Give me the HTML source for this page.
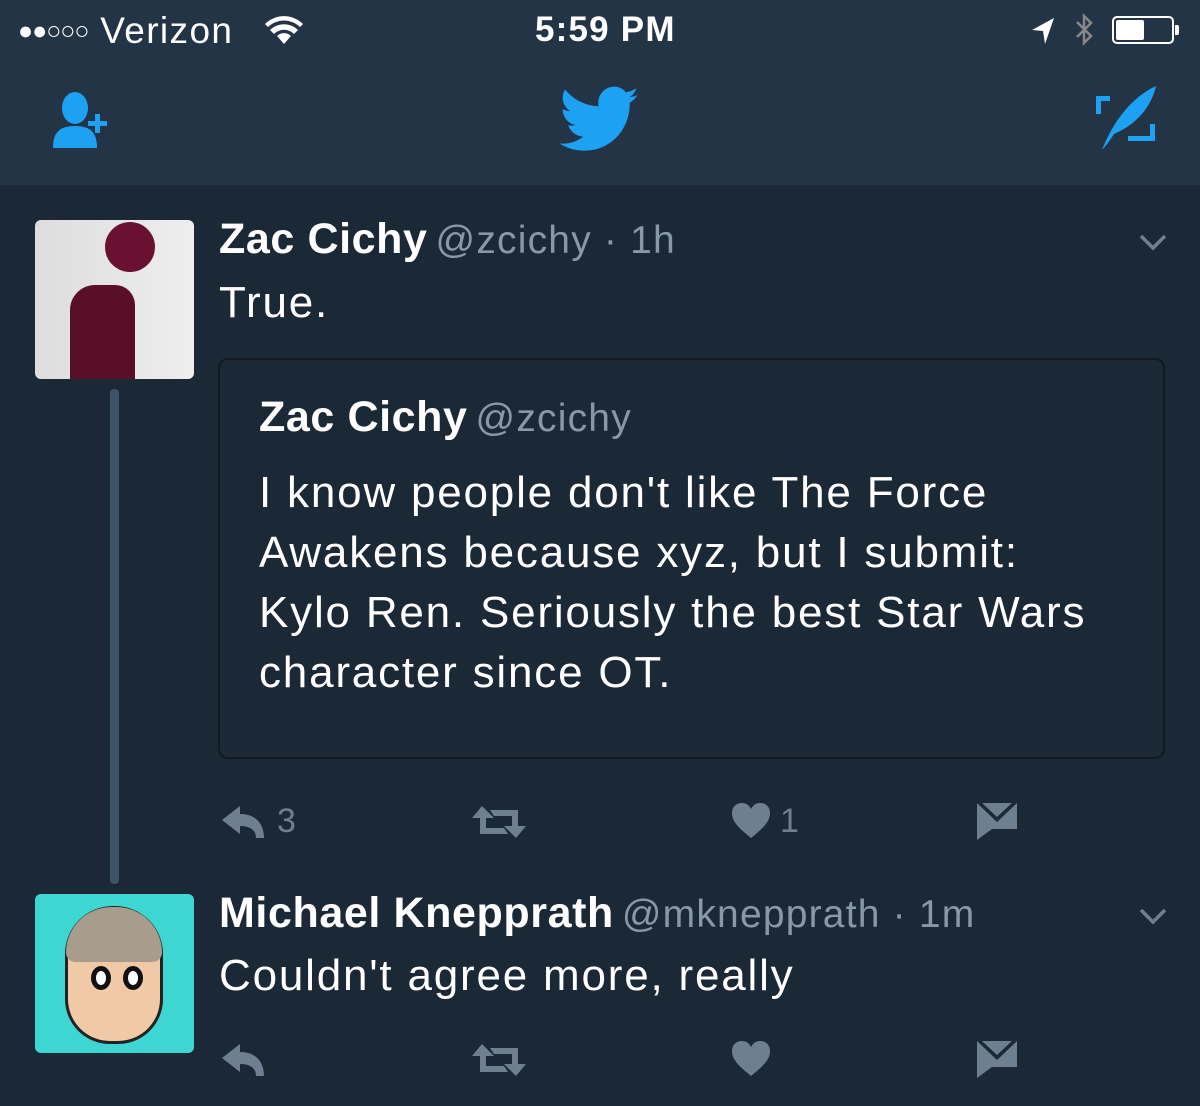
<!DOCTYPE html>
<html><head><meta charset="utf-8"><style>
*{margin:0;padding:0;box-sizing:border-box}
body{width:1200px;height:1106px;background:#1b2836;font-family:"Liberation Sans",sans-serif;color:#fff;position:relative;overflow:hidden}
.hdr{position:absolute;left:0;top:0;width:1200px;height:185px;background:#243447}
.abs{position:absolute;white-space:nowrap}
.name{font-weight:bold;font-size:43px;letter-spacing:0.6px}
.handle{color:#8899a6;font-weight:normal;font-size:39px;letter-spacing:1.2px;margin-left:8px}
.txt{font-size:44px;letter-spacing:1.8px}
.g{fill:#6e7f8f}
</style></head><body>
<div class="hdr"></div>
<div class="abs" style="left:18px;top:10px;font-size:37px;letter-spacing:1.4px">
<span style="font-size:25px;letter-spacing:-1px;position:relative;top:-4px">●●○○○</span> Verizon</div>
<svg class="abs" style="left:264px;top:16px" width="40" height="30" viewBox="0 0 40 30"><path d="M20 28 L13 20 A10 10 0 0 1 27 20 Z M6 14 A20 20 0 0 1 34 14 L30 18 A14 14 0 0 0 10 18 Z M1 8 A27 27 0 0 1 39 8 L36 11 A23 23 0 0 0 4 11Z" fill="#fff"/></svg>
<div class="abs" style="left:535px;top:10px;font-size:35px;font-weight:bold;letter-spacing:1.2px">5:59 PM</div>
<svg class="abs" style="left:1028px;top:14px" width="30" height="32"><path d="M26 4 L4 16 L15 17 L17 30 Z" fill="#fff"/></svg>
<svg class="abs" style="left:1070px;top:10px" width="28" height="40"><path d="M7 12 L21 26 L14 33 L14 6 L21 13 L7 27" stroke="#888" stroke-width="2.5" fill="none"/></svg>
<div class="abs" style="left:1112px;top:16px;width:62px;height:28px;border:2px solid #fff;border-radius:5px"><div style="width:28px;height:20px;margin:2px;background:#fff;border-radius:2px"></div></div>
<div class="abs" style="left:1175px;top:25px;width:4px;height:10px;background:#fff;border-radius:0 2px 2px 0"></div>
<svg class="abs" style="left:50px;top:90px" width="76" height="60" viewBox="0 0 76 60"><ellipse cx="25" cy="18" rx="13" ry="16" fill="#1da1f2"/><path d="M3 58 C3 42 10 36 25 36 C40 36 47 42 47 58 Z" fill="#1da1f2"/><rect x="45" y="24" width="5" height="19" fill="#1da1f2"/><rect x="38" y="31" width="19" height="5" fill="#1da1f2"/></svg>
<svg class="abs" style="left:560px;top:86px" width="80" height="68" viewBox="0 0 24 20"><path fill="#1da1f2" d="M23.6 2.4c-.9.4-1.8.6-2.8.8 1-.6 1.8-1.6 2.1-2.7-.9.6-2 1-3.1 1.2C19 .7 17.7 0 16.3 0c-2.7 0-4.8 2.2-4.8 4.8 0 .4 0 .8.1 1.1C7.5 5.7 3.9 3.8 1.5.8 1.1 1.5.8 2.4.8 3.3c0 1.7.9 3.2 2.2 4-.8 0-1.5-.2-2.2-.6v.1c0 2.3 1.7 4.3 3.9 4.7-.4.1-.8.2-1.3.2-.3 0-.6 0-.9-.1.6 1.9 2.4 3.3 4.5 3.4-1.7 1.3-3.7 2.1-6 2.1-.4 0-.8 0-1.2-.1 2.1 1.4 4.7 2.2 7.4 2.2 8.9 0 13.7-7.4 13.7-13.7v-.6c1-.7 1.8-1.6 2.5-2.5z"/></svg>
<svg class="abs" style="left:1090px;top:84px" width="70" height="70" viewBox="0 0 70 70"><path d="M6 12 H20 V17 H11 V30 H6 Z M38 52 H60 V40 H65 V57 H38 Z" fill="#1da1f2"/><path d="M12 66 C22 40 40 14 66 2 C62 20 50 36 32 46 L24 50 C20 56 16 62 12 66 Z" fill="#1da1f2"/></svg>

<!-- tweet 1 -->
<div class="abs" style="left:35px;top:220px;width:159px;height:159px;border-radius:6px;background:linear-gradient(90deg,#ddd,#eee);overflow:hidden">
<div style="position:absolute;left:70px;top:2px;width:50px;height:50px;border-radius:50%;background:#6a1030"></div>
<div style="position:absolute;left:35px;top:65px;width:65px;height:110px;border-radius:25px 20px 0 0;background:#5a0f28"></div></div>
<div class="abs" style="left:110px;top:389px;width:9px;height:495px;border-radius:4px;background:#3d5466"></div>
<div class="abs" style="left:219px;top:215px"><span class="name">Zac Cichy</span><span class="handle">@zcichy · 1h</span></div>
<svg class="abs" style="left:1138px;top:232px" width="30" height="20"><path d="M3 4 L15 16 L27 4" stroke="#6e7f8f" stroke-width="3.5" fill="none"/></svg>
<div class="abs txt" style="left:219px;top:278px">True.</div>
<div class="abs" style="left:218px;top:358px;width:947px;height:401px;border:2px solid #111a23;border-radius:10px"></div>
<div class="abs" style="left:259px;top:393px"><span class="name">Zac Cichy</span><span class="handle">@zcichy</span></div>
<div class="abs txt" style="left:259px;top:463px;line-height:60px">I know people don't like The Force<br>Awakens because xyz, but I submit:<br>Kylo Ren. Seriously the best Star Wars<br>character since OT.</div>

<svg class="abs" style="left:220px;top:804px" width="48" height="36" viewBox="0 0 48 36"><path class="g" d="M2 16 L20 2 V10 C36 10 44 20 44 34 H36 C36 26 30 22 20 22 V30 Z"/></svg>
<div class="abs" style="left:277px;top:802px;font-size:34px;color:#6e7f8f">3</div>
<svg class="abs" style="left:470px;top:804px" width="58" height="36" viewBox="0 0 58 36"><path class="g" d="M12 2 L24 14 H16 V24 H34 L38 30 H10 V14 H2 Z M46 34 L34 22 H42 V12 H24 L20 6 H48 V22 H56 Z"/></svg>
<svg class="abs" style="left:731px;top:802px" width="40" height="38" viewBox="0 0 40 38"><path class="g" d="M20 36 C8 26 1 20 1 11 C1 5 5 1 11 1 C15 1 18 3 20 7 C22 3 25 1 29 1 C35 1 39 5 39 11 C39 20 32 26 20 36Z"/></svg>
<div class="abs" style="left:780px;top:802px;font-size:34px;color:#6e7f8f">1</div>
<svg class="abs" style="left:976px;top:802px" width="42" height="38" viewBox="0 0 42 38"><path class="g" d="M1 1 L21 20 L41 1 V27 H16 L1 38 Z"/><path d="M6 1 H36 L21 15 Z" class="g"/></svg>

<!-- tweet 2 -->
<div class="abs" style="left:35px;top:894px;width:159px;height:159px;border-radius:6px;background:#3dd6d2;overflow:hidden">
<div style="position:absolute;left:30px;top:12px;width:98px;height:138px;border-radius:48px 48px 45px 45px;background:#f0c9a6;border:3px solid #222"></div>
<div style="position:absolute;left:31px;top:13px;width:96px;height:55px;border-radius:48px 48px 10px 10px;background:#a89d8c"></div>
<div style="position:absolute;left:56px;top:72px;width:20px;height:24px;border-radius:50%;background:#fff;border:5px solid #111"></div>
<div style="position:absolute;left:88px;top:72px;width:20px;height:24px;border-radius:50%;background:#fff;border:5px solid #111"></div>
</div>
<div class="abs" style="left:219px;top:889px"><span class="name">Michael Knepprath</span><span class="handle">@mknepprath · 1m</span></div>
<svg class="abs" style="left:1138px;top:906px" width="30" height="20"><path d="M3 4 L15 16 L27 4" stroke="#6e7f8f" stroke-width="3.5" fill="none"/></svg>
<div class="abs txt" style="left:219px;top:951px">Couldn't agree more, really</div>

<svg class="abs" style="left:220px;top:1042px" width="48" height="36" viewBox="0 0 48 36"><path class="g" d="M2 16 L20 2 V10 C36 10 44 20 44 34 H36 C36 26 30 22 20 22 V30 Z"/></svg>
<svg class="abs" style="left:470px;top:1042px" width="58" height="36" viewBox="0 0 58 36"><path class="g" d="M12 2 L24 14 H16 V24 H34 L38 30 H10 V14 H2 Z M46 34 L34 22 H42 V12 H24 L20 6 H48 V22 H56 Z"/></svg>
<svg class="abs" style="left:731px;top:1040px" width="40" height="38" viewBox="0 0 40 38"><path class="g" d="M20 36 C8 26 1 20 1 11 C1 5 5 1 11 1 C15 1 18 3 20 7 C22 3 25 1 29 1 C35 1 39 5 39 11 C39 20 32 26 20 36Z"/></svg>
<svg class="abs" style="left:976px;top:1040px" width="42" height="38" viewBox="0 0 42 38"><path class="g" d="M1 1 L21 20 L41 1 V27 H16 L1 38 Z"/><path d="M6 1 H36 L21 15 Z" class="g"/></svg>
</body></html>
